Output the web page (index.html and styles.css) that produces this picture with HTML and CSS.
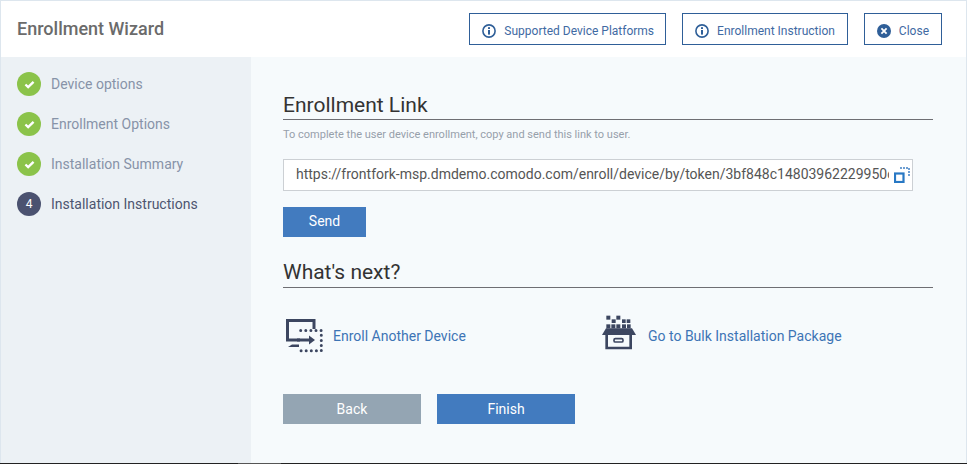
FILE: index.html
```html
<!DOCTYPE html>
<html lang="en">
<head>
<meta charset="utf-8">
<title>Enrollment Wizard</title>
<link rel="stylesheet" href="styles.css">
</head>
<body>
<div class="wizard">
  <header class="topbar">
    <h1 class="title">Enrollment Wizard</h1>
    <div class="actions">
      <button class="outline-btn">
        <svg class="btn-icon" viewBox="0 0 14 14"><circle cx="7" cy="7" r="6.100" fill="none" stroke="#2f5f98" stroke-width="1.600"/><rect x="6" y="6" width="2" height="4.600" fill="#2f5f98"/><rect x="6" y="3.200" width="2" height="1.800" fill="#2f5f98"/></svg>
        Supported Device Platforms
      </button>
      <button class="outline-btn">
        <svg class="btn-icon" viewBox="0 0 14 14"><circle cx="7" cy="7" r="6.100" fill="none" stroke="#2f5f98" stroke-width="1.600"/><rect x="6" y="6" width="2" height="4.600" fill="#2f5f98"/><rect x="6" y="3.200" width="2" height="1.800" fill="#2f5f98"/></svg>
        Enrollment Instruction
      </button>
      <button class="outline-btn">
        <svg class="btn-icon" viewBox="0 0 14 14"><circle cx="7" cy="7" r="7" fill="#2f5f98"/><path d="M4.400 4.400l5.200 5.200M9.600 4.400l-5.200 5.200" stroke="#fff" stroke-width="1.800" fill="none"/></svg>
        Close
      </button>
    </div>
  </header>
  <div class="body">
    <nav class="steps">
      <div class="step done"><span class="badge"><svg viewBox="0 0 12 10" class="check"><path d="M1.500 5l3 3 6-6" fill="none" stroke="#fff" stroke-width="2.600"/></svg></span>Device options</div>
      <div class="step done"><span class="badge"><svg viewBox="0 0 12 10" class="check"><path d="M1.500 5l3 3 6-6" fill="none" stroke="#fff" stroke-width="2.600"/></svg></span>Enrollment Options</div>
      <div class="step done"><span class="badge"><svg viewBox="0 0 12 10" class="check"><path d="M1.500 5l3 3 6-6" fill="none" stroke="#fff" stroke-width="2.600"/></svg></span>Installation Summary</div>
      <div class="step current"><span class="badge">4</span>Installation Instructions</div>
    </nav>
    <main class="content">
      <h2 class="section-title">Enrollment Link</h2>
      <p class="hint">To complete the user device enrollment, copy and send this link to user.</p>
      <div class="link-field">
        <input class="link-input" type="text" readonly value="https://frontfork-msp.dmdemo.comodo.com/enroll/device/by/token/3bf848c14803962229950c8f1a7e">
        <svg class="copy-icon" viewBox="0 0 16 16"><rect x="1" y="6.500" width="8.500" height="8.500" fill="none" stroke="#2878c4" stroke-width="2.200"/><path d="M6 1h9v9" fill="none" stroke="#6f9fd2" stroke-width="2" stroke-dasharray="2 1"/></svg>
      </div>
      <button class="solid-btn send">Send</button>
      <h2 class="section-title next">What's next?</h2>
      <div class="links">
        <a class="next-link first">
          <svg class="next-icon enroll" viewBox="0 0 38 36">
            <path d="M28 10V1.500H1.500V21H14" fill="none" stroke="#3c4660" stroke-width="3"/>
            <path d="M11 21H24" stroke="#3c4660" stroke-width="3"/>
            <path d="M23 16.500L29 21L23 25.500Z" fill="#3c4660"/>
            <path d="M2 28L6 25.500H13V28Z" fill="#3c4660"/>
            <path d="M14.700 11.400H35.300V31.800H14.700" fill="none" stroke="#3c4660" stroke-width="3" stroke-linecap="round" stroke-dasharray="0 5.100"/>
          </svg>
          Enroll Another Device
        </a>
        <a class="next-link">
          <svg class="next-icon bulk" viewBox="35 30 102 105">
            <path d="M35 90L47 70H125L137 90Z" fill="#3c4660"/>
            <path d="M49 90V129H121V90" fill="none" stroke="#3c4660" stroke-width="8"/>
            <rect x="71" y="101" width="27" height="10" rx="4" fill="none" stroke="#3c4660" stroke-width="5"/>
            <g fill="#3c4660">
              <rect x="48" y="32" width="12" height="12"/><rect x="78" y="32" width="12" height="12"/>
              <rect x="64" y="43" width="12" height="11"/><rect x="95" y="43" width="11" height="11"/><rect x="109" y="43" width="11" height="11"/>
              <rect x="48" y="58" width="12" height="12"/><rect x="63" y="58" width="12" height="12"/><rect x="78" y="58" width="12" height="12"/><rect x="95" y="58" width="12" height="12"/><rect x="110" y="58" width="11" height="12"/>
            </g>
          </svg>
          Go to Bulk Installation Package
        </a>
      </div>
      <div class="footer-actions">
        <button class="solid-btn wide back">Back</button>
        <button class="solid-btn wide">Finish</button>
      </div>
    </main>
  </div>
  <div class="edge"></div>
</div>
</body>
</html>
```
FILE: styles.css
```css
* { box-sizing: border-box; }
html, body { margin: 0; padding: 0; height: 100%; overflow: hidden; }
body { font-family: Roboto, "Liberation Sans", sans-serif; background: #f6fafb; }
.wizard { width: 967px; height: 464px; display: flex; flex-direction: column; border: 1px solid #dde6ee; border-width: 1px 1px 0 1px; }
.topbar { height: 56px; flex: none; background: #fff; display: flex; align-items: center; justify-content: space-between; padding: 0 24px 0 16px; }
.title { margin: 0 0 1px; font-size: 18px; font-weight: 500; color: #6b6b6b; }
.actions { display: flex; gap: 16px; }
.outline-btn { height: 32px; padding: 3px 12px 0; display: flex; align-items: center; gap: 8px; background: #fff; border: 1px solid #2f5f98; border-radius: 0; font: 400 12px Roboto, sans-serif; color: #3f6aa3; }
.outline-btn:first-child { padding-right: 11px; }
.btn-icon { width: 14px; height: 14px; flex: none; }
.body { flex: 1; display: flex; min-height: 0; }
.steps { width: 250px; flex: none; background: #ecf1f5; padding: 15px 16px 0; display: flex; flex-direction: column; gap: 16px; }
.step { display: flex; align-items: center; gap: 10px; height: 24px; font-size: 14px; color: #8793a8; }
.step.current { color: #4d5570; }
.badge { width: 24px; height: 24px; border-radius: 50%; flex: none; display: flex; align-items: center; justify-content: center; background: #8bc34a; color: #fff; font-size: 12px; }
.current .badge { background: #4b5270; }
.check { width: 11px; height: 9px; }
.content { flex: 1; min-width: 0; padding: 35px 33px 0 32px; background: #f6fafc; }
.section-title { margin: 0; font-size: 21px; font-weight: 400; line-height: 26px; padding-bottom: 1px; color: #333; border-bottom: 1px solid #6e6e73; }
.hint { margin: 8px 0 0; font-size: 11px; line-height: 14px; color: #96a0ab; }
.link-field { position: relative; margin-top: 17px; width: 630px; height: 32px; }
.link-input { display: block; width: 100%; height: 100%; margin: 0; background: #fff; border: 1px solid #ccd0d4; border-radius: 0; padding: 0 23px 2px 12px; font: 400 14px Roboto, sans-serif; color: #555; outline: none; }
.copy-icon { position: absolute; left: 611px; top: 8px; width: 16px; height: 16px; }
.solid-btn { border: none; border-radius: 0; background: #427bbf; color: #fff; font: 400 14px Roboto, sans-serif; height: 30px; }
.send { width: 83px; margin-top: 16px; display: block; padding-bottom: 3px; }
.next { margin-top: 22px; padding-bottom: 2px; }
.links { display: flex; margin-top: 30px; height: 36px; }
.next-link { display: flex; align-items: center; gap: 12px; font-size: 14px; color: #3d74b5; }
.next-link.first { width: 319px; padding-left: 3px; gap: 9px; }
.next-icon { flex: none; }
.enroll { width: 38px; height: 36px; margin-top: 2px; }
.bulk { width: 34px; height: 35px; margin-top: -7px; }
.footer-actions { display: flex; gap: 16px; margin-top: 40px; }
.wide { width: 138px; }
.back { background: #94a5b3; }
.edge { height: 1px; flex: none; margin: 0 -1px; background: linear-gradient(to right, #222 238px, #555 238px, #555 281px, #222 281px); }
```
